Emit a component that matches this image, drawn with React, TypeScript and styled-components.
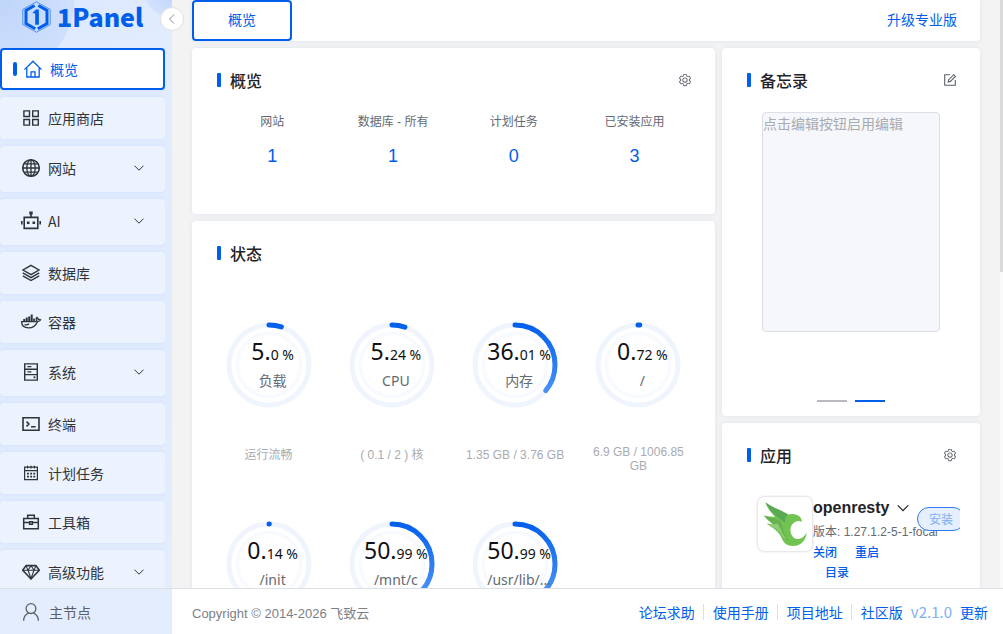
import React from "react";
import styled, { createGlobalStyle, css } from "styled-components";

const blue = "#005eeb";
const latin = `"Liberation Sans", "Noto Sans CJK SC", sans-serif`;
const cjk = `"Noto Sans CJK SC", sans-serif`;

const GlobalStyle = createGlobalStyle`
  *, *::before, *::after { box-sizing: border-box; }
  body { margin: 0; font-family: ${latin}; font-size: 14px; color: #1f2329; background: #f3f3f3; }
  button, textarea { font: inherit; margin: 0; }
  button { border: 0; background: none; padding: 0; cursor: pointer; color: inherit; }
  a { color: inherit; text-decoration: none; }
  h1, h2, h3, p, ul { margin: 0; padding: 0; font-weight: inherit; }
  ul { list-style: none; }
  svg { display: block; flex: none; }
`;

/* ---------- shell ---------- */

const Shell = styled.div`
  display: flex;
  height: 100vh;
  overflow: hidden;
`;

const Sidebar = styled.aside`
  position: relative;
  z-index: 2;
  flex: none;
  width: 172px;
  display: flex;
  flex-direction: column;
  background:
    radial-gradient(circle at 170px -10px, #bdd3fa 0, #d3e2fd 26px, transparent 27px),
    radial-gradient(circle at 0 0, #bfd5fa 0, #cfe0fc 74px, transparent 75px),
    linear-gradient(160deg, #dbe7fd 0, #e1ecfe 90px, #e0ecfe 420px, #e4edfd 100%);
`;

const Brand = styled.a`
  display: flex;
  align-items: center;
  gap: 5px;
  height: 34px;
  margin-bottom: 14px;
  padding-left: 21px;
  color: ${blue};
`;

const BrandName = styled.span`
  padding-bottom: 2px;
  font: 900 25px/32px "Noto Sans CJK SC", sans-serif;
`;

const CollapseButton = styled.button`
  position: absolute;
  top: 7px;
  right: -12px;
  width: 24px;
  height: 24px;
  display: grid;
  place-items: center;
  border: 1px solid #dfe0e3;
  border-radius: 50%;
  background: #fff;
  color: #8b8f96;
`;

const Menu = styled.ul`
  flex: 1;
  min-height: 0;
  overflow: hidden;
  display: flex;
  flex-direction: column;
  gap: 7px;
  margin-right: 7px;
`;

const MenuItem = styled.li`
  flex: none;
`;

const MenuLink = styled.a<{ $active?: boolean; $tall?: boolean }>`
  display: flex;
  align-items: center;
  height: ${(p) => (p.$tall ? 46 : 42)}px;
  padding: 0 20px ${(p) => (p.$tall ? 2 : 0)}px 11px;
  border-radius: 4px;
  background: #ecf3ff;
  box-shadow: 0 0 4px rgba(0, 94, 235, 0.08);
  color: #303338;
  font: 14px/20px ${cjk};
  ${(p) =>
    p.$active &&
    css`
      border: 2px solid ${blue};
      background: #fff;
      color: ${blue};
    `}
`;

const ActiveMark = styled.span<{ $on?: boolean }>`
  width: 4px;
  height: 14px;
  margin-right: 7px;
  border-radius: 2px;
  background: ${(p) => (p.$on ? blue : "transparent")};
`;

const MenuText = styled.span`
  flex: 1;
  margin-left: 8px;
`;

const NodeLink = styled.a`
  flex: none;
  display: flex;
  align-items: center;
  gap: 9px;
  height: 46px;
  padding: 0 0 0 22px;
  border-top: 1px solid #dcdfe6;
  background: #e4edfd;
  color: #5b6068;
  font: 14px/20px ${cjk};
`;

const Main = styled.div`
  flex: 1;
  min-width: 0;
  display: flex;
  flex-direction: column;
`;

const Viewport = styled.div`
  flex: 1;
  min-height: 0;
  display: flex;
`;

const Page = styled.main`
  flex: 1;
  min-width: 0;
  overflow: hidden;
  padding: 0 20px;
`;

const ScrollRail = styled.div`
  flex: none;
  width: 3px;
  background: #fafafa;
`;

const ScrollThumb = styled.div`
  height: 272px;
  background: #dadada;
`;

const TabBar = styled.nav`
  display: flex;
  align-items: center;
  justify-content: space-between;
  height: 41px;
  margin-bottom: 7px;
  padding-right: 23px;
  border-radius: 0 0 4px 4px;
  background: #fff;
  box-shadow: 0 0 4px rgba(0, 94, 235, 0.1);
  color: ${blue};
  font: 14px/20px ${cjk};
`;

const Tab = styled.button`
  width: 100px;
  height: 41px;
  padding-bottom: 4px;
  border: 2px solid ${blue};
  border-radius: 4px;
`;

const UpgradeLink = styled.a`
  padding-bottom: 4px;
`;

const Columns = styled.div`
  display: grid;
  grid-template-columns: 2fr 1fr;
  margin-right: -7px;
`;

const Column = styled.div`
  min-width: 0;
  display: flex;
  flex-direction: column;
  gap: 7px;
  padding-right: 7px;
`;

/* ---------- cards ---------- */

const Card = styled.section`
  padding: 19px 20px 14px;
  border-radius: 4px;
  background: #fff;
  box-shadow: 0 0 4px rgba(0, 94, 235, 0.1);
`;

const CardHeader = styled.header`
  display: flex;
  align-items: center;
  height: 26px;
  padding: 0 3px 0 5px;
`;

const CardMark = styled.span`
  width: 4px;
  height: 14px;
  margin-right: 9px;
  border-radius: 1px;
  background: ${blue};
`;

const CardTitle = styled.h2`
  flex: 1;
  font: 500 16px/24px ${cjk};
  color: #1f2329;
`;

const IconButton = styled.button`
  color: #5b6068;
`;

const Stats = styled.div`
  display: grid;
  grid-template-columns: repeat(4, 1fr);
  margin-top: 20px;
  padding-bottom: 32px;
  text-align: center;
`;

const StatLabel = styled.p`
  font-size: 12px;
  line-height: 18px;
  color: #646a73;
`;

const StatValue = styled.a`
  display: block;
  margin-top: 13px;
  font-size: 18px;
  line-height: 24px;
  color: ${blue};
`;

const Gauges = styled.div`
  display: grid;
  grid-template-columns: repeat(4, 1fr);
  grid-auto-rows: 199px;
  margin: 56px -5px 0;
`;

const Gauge = styled.div`
  display: flex;
  flex-direction: column;
  align-items: center;
`;

const Dial = styled.div`
  display: grid;
  width: 86px;
  height: 86px;
  > * {
    grid-area: 1 / 1;
  }
`;

const DialText = styled.div`
  display: flex;
  flex-direction: column;
  align-items: center;
  padding: 15px 0 0 8px;
  white-space: nowrap;
  font-family: "Noto Sans", ${cjk};
  z-index: 1;
`;

const DialValue = styled.p`
  display: flex;
  align-items: baseline;
  height: 28px;
  font-size: 14px;
  line-height: 28px;
  color: #0f1114;
`;

const DialWhole = styled.span`
  font-size: 23px;
`;

const DialName = styled.p`
  margin-top: 6px;
  font-size: 14px;
  line-height: 20px;
  color: #646a73;
`;

const GaugeNote = styled.p`
  display: flex;
  align-items: center;
  max-width: 102px;
  min-height: 20px;
  margin-top: 37px;
  font-size: 12px;
  line-height: 14px;
  text-align: center;
  color: #a8abb2;
`;

const Memo = styled.textarea`
  display: block;
  width: calc(100% - 40px);
  height: 220px;
  margin: 19px 20px 68px;
  padding: 0;
  resize: none;
  border: 1px solid #dcdfe6;
  border-radius: 4px;
  background: #f5f7fa;
  font: 14px/21px ${cjk};
  &::placeholder {
    color: #a8abb2;
  }
`;

const Pager = styled.div`
  display: flex;
  justify-content: center;
  gap: 8px;
`;

const PagerDash = styled.button<{ $on?: boolean }>`
  width: 30px;
  height: 2px;
  background: ${(p) => (p.$on ? blue : "#b8bac0")};
`;

const AppRow = styled.div`
  display: flex;
  align-items: flex-start;
  gap: 1px;
  margin-top: 27px;
  padding: 2px 0 60px 16px;
  overflow: hidden;
`;

const AppLogo = styled.div`
  flex: none;
  display: grid;
  place-items: center;
  width: 54px;
  height: 54px;
  border-radius: 6px;
  background: #fff;
  box-shadow: 0 0 3px rgba(0, 0, 0, 0.25);
`;

const AppInfo = styled.div`
  flex: none;
  width: 103px;
  white-space: nowrap;
`;

const AppName = styled.h3`
  display: flex;
  align-items: center;
  gap: 7px;
  height: 22px;
  font-size: 16px;
  font-weight: 700;
  color: #1f2329;
`;

const AppVersion = styled.p`
  margin-top: 3px;
  font-size: 12px;
  line-height: 20px;
  color: #646a73;
`;

const AppActions = styled.div`
  display: flex;
  flex-wrap: wrap;
  column-gap: 6px;
`;

const TextButton = styled.button`
  font: 500 12px/20px ${cjk};
  color: ${blue};
  & + & {
    margin-left: 12px;
  }
`;

const InstallButton = styled.button`
  z-index: 1;
  flex: none;
  width: 48px;
  height: 24px;
  margin-top: 10px;
  border: 1px solid #2f7af0;
  border-radius: 12px;
  background: #e5effd;
  color: #80aff5;
  font: 12px/20px ${cjk};
`;

/* ---------- footer ---------- */

const Footer = styled.footer`
  flex: none;
  display: flex;
  align-items: center;
  justify-content: space-between;
  height: 46px;
  padding: 1px 15px 0 20px;
  border-top: 1px solid #dcdfe6;
  background: #fff;
`;

const Copyright = styled.span`
  font-size: 13px;
  color: #7d8086;
`;

const FooterLinks = styled.div`
  display: flex;
  align-items: center;
  gap: 8px;
  font: 14px/20px ${cjk};
  color: ${blue};
`;

const Divider = styled.span`
  width: 1px;
  height: 16px;
  margin-right: 1px;
  background: #dcdfe6;
`;

const Version = styled.span`
  font-size: 15px;
  color: #80aff5;
`;

/* ---------- drawings ---------- */

const Svg = ({ size = 18, children, w = 1.4 }: { size?: number; w?: number; children: React.ReactNode }) => (
  <svg width={size} height={size} viewBox="0 0 18 18" fill="none" stroke="currentColor" strokeWidth={w} overflow="visible" aria-hidden>
    {children}
  </svg>
);

const icons: Record<string, React.ReactNode> = {
  home: (
    <Svg w={1.3}>
      <path d="M.5 9.6 9 1.2l8.5 8.4M2.8 8v9h12.4V8M7 17v-5.2h4V17" />
    </Svg>
  ),
  grid: (
    <Svg w={1.4}>
      <path d="M1.9 1.9h5.6v5.6H1.9zM10.7 1.9h5.6v5.6h-5.6zM1.9 10.5h5.6v5.6H1.9zM10.7 10.5h5.6v5.6h-5.6z" />
    </Svg>
  ),
  globe: (
    <Svg w={1.3}>
      <circle cx="9" cy="9" r="8.3" strokeWidth="1.6" />
      <ellipse cx="9" cy="9" rx="4.2" ry="8.2" />
      <path d="M9 .8v16.4M.8 9h16.4M2.2 4.8h13.6M2.2 13.2h13.6" />
    </Svg>
  ),
  robot: (
    <Svg w={1.6}>
      <path d="M2.2 5.4h13.6v11H2.2zM9 5V2" />
      <path d="M7.3-.4h3.400v3H7.300zM4.9 9.4h2.6V12H4.9zM10.5 9.4h2.6V12h-2.6zM-1 9h1.600v3.6H-1zM17.4 9H19v3.6h-1.600z" fill="currentColor" stroke="none" />
    </Svg>
  ),
  layers: (
    <Svg w={1.4}>
      <path d="M9 1.4 17 6 9 10.600 1 6zM.8 8.900 9 13.600l8.200-4.700M.8 11.800 9 16.500l8.200-4.700" />
    </Svg>
  ),
  docker: (
    <Svg w={1.3}>
      <path d="M-.4 8.600H12.800C14.200 8.600 14.600 8 14.500 7.200 14 6.200 14.200 5.200 14.800 4.400c.9.500 1.300 1.200 1.400 2 .9-.2 1.700-.1 2.400.3-.5 1.100-1.500 1.700-3 1.700C13.700 13 10.800 14.800 6.600 14.800c-4.800 0-7-2-7-6.200Z" />
      <path d="M2.500 11.600c1.800.5 3.300.2 4.500-.8" />
      <path d="M1.200 6h2v2h-2zM3.700 4.400h2V8h-2zM6.200 3.600h2V8h-2zM8.700 1.600h2V8h-2zM11.200 5.600h1.700V8h-1.700z" fill="currentColor" stroke="none" />
    </Svg>
  ),
  server: (
    <Svg w={1.4}>
      <path d="M2.700.9h12.600v16.200H2.700zM2.700 6.200h12.600M2.700 11.600h12.600M5.400 3.600h4M5.400 8.900h4" />
      <path d="M11.600 13.400h1.800v1.800h-1.800z" fill="currentColor" stroke="none" />
    </Svg>
  ),
  terminal: (
    <Svg w={1.6}>
      <path d="M1 2.800h16v12.400H1zM4.500 6.600l2.400 2.400-2.400 2.400M9 11.800h4.600" />
    </Svg>
  ),
  calendar: (
    <Svg w={1.2}>
      <path d="M2.600 3.200h12.800v12.400H2.600zM2.600 6.600h12.800M5.600 1.800v2.600M9 1.800v2.600M12.400 1.800v2.600" />
      <path d="M5 9.600h8.200M5 12.600h8.200" strokeWidth="1.600" strokeDasharray="1.900 1.250" />
    </Svg>
  ),
  toolbox: (
    <Svg w={1.500}>
      <path d="M1.700 5.400h14.600v10.400H1.700zM5.700 5.200V2.200h6.600v3M1.700 9.400h5.500M10.800 9.400h5.500M7.600 8.800h2.800v2.400H7.600z" />
    </Svg>
  ),
  gem: (
    <Svg w={1.600}>
      <path d="M4 2.600h10l3.300 4.600L9 16 .7 7.200z" strokeLinejoin="round" />
      <path d="M.7 7.200h16.600M4 2.600l2 4.600L9 2.800l3 4.400 2-4.600M6 7.200 9 15.500l3-8.300" strokeWidth="1.100" />
    </Svg>
  ),
  user: (
    <Svg w={1.300}>
      <circle cx="9" cy="5.600" r="4.900" />
      <path d="M1.600 17.800c.2-4.300 2.500-6.700 5-7.600M16.400 17.800c-.2-4.300-2.500-6.700-5-7.600" />
    </Svg>
  ),
};

const Chevron = ({ size = 12, d = "M1.500 3.700 6 8.200l4.500-4.500" }: { size?: number; d?: string }) => (
  <svg width={size} height={size} viewBox="0 0 12 12" fill="none" stroke="currentColor" strokeWidth="1" aria-hidden>
    <path d={d} />
  </svg>
);

const Gear = () => (
  <svg width="14" height="14" viewBox="0 0 1024 1024" fill="currentColor" aria-hidden>
    <path d="M600.704 64a32 32 0 0 1 30.464 22.208l35.2 109.376c14.784 7.232 28.928 15.36 42.432 24.512l112.384-24.192a32 32 0 0 1 34.432 15.36L944.32 364.8a32 32 0 0 1-4.032 37.504l-77.12 85.12a357.12 357.12 0 0 1 0 49.024l77.12 85.248a32 32 0 0 1 4.032 37.504l-88.704 153.6a32 32 0 0 1-34.432 15.296L708.8 803.904c-13.44 9.088-27.648 17.28-42.368 24.512l-35.264 109.376A32 32 0 0 1 600.704 960H423.296a32 32 0 0 1-30.464-22.208L357.696 828.48a351.616 351.616 0 0 1-42.56-24.64l-112.32 24.256a32 32 0 0 1-34.432-15.36L79.68 659.2a32 32 0 0 1 4.032-37.504l77.12-85.248a357.12 357.12 0 0 1 0-48.896l-77.12-85.248A32 32 0 0 1 79.68 364.8l88.704-153.6a32 32 0 0 1 34.432-15.296l112.32 24.256c13.568-9.152 27.776-17.408 42.56-24.64l35.2-109.312A32 32 0 0 1 423.232 64H600.64zm-23.424 64H446.72l-36.352 113.088-24.512 11.968a294.113 294.113 0 0 0-34.816 20.096l-22.656 15.36-116.224-25.088-65.28 113.152 79.68 88.192-1.92 27.136a293.12 293.12 0 0 0 0 40.192l1.92 27.136-79.808 88.192 65.344 113.152 116.224-25.024 22.656 15.296a294.113 294.113 0 0 0 34.816 20.096l24.512 11.968L446.72 896h130.688l36.48-113.152 24.448-11.904a288.282 288.282 0 0 0 34.752-20.096l22.592-15.296 116.288 25.024 65.28-113.152-79.744-88.192 1.92-27.136a293.12 293.12 0 0 0 0-40.256l-1.92-27.136 79.808-88.128-65.344-113.152-116.288 24.96-22.592-15.232a287.616 287.616 0 0 0-34.752-20.096l-24.448-11.904L577.344 128zM512 320a192 192 0 1 1 0 384 192 192 0 0 1 0-384zm0 64a128 128 0 1 0 0 256 128 128 0 0 0 0-256z" />
  </svg>
);

const EditIcon = () => (
  <svg width="14" height="14" viewBox="0 0 14 14" fill="none" stroke="currentColor" strokeWidth="1.100" aria-hidden>
    <path d="M7 1.700H1.700v10.600h10.600V7" />
    <path d="M5.200 8.900l.5-2.200 5-5 1.700 1.700-5 5z" />
  </svg>
);

const BrandMark = () => (
  <svg width="31" height="32" viewBox="0 0 31 32" fill="none" stroke={blue} aria-hidden>
    <path d="M15.500.800 29.200 8.400v15.200L15.500 31.200 1.800 23.600V8.400z" strokeWidth=".8" opacity=".75" />
    <path d="M13.600 4.500 5 9.400v13.200l9.200 5.100M17.400 4.500 26 9.400v13.200l-9.200 5.100" strokeWidth="3" />
    <path d="M11.400 12l3.600-3.600h2.900v15.400h-3.700V12.600z" fill={blue} stroke="none" />
  </svg>
);

const OpenRestyLogo = () => (
  <svg width="44" height="46" viewBox="0 0 44 46" aria-hidden>
    <path d="M2.500 1.500C10 7 18 9 25 13.500c3-.7 6-.7 8.500.3 3.500 1.200 5.300 3.600 5.500 7.200-2-1.200-4-1.300-6-.5-5 2-6.500 7.500-5 12 1.300 4 4 5.500 7 5.500 4 0 7-3 8.500-6.500C43.500 39 38 45 30 45c-6 0-9.500-3-11.500-8C16 30 9 27 4 22.500c4 1 8 1 10-.2C8 20.500 4 18 1 14.500c4 1 7.500 1.500 11 1C8 12 4.500 7 2.500 1.500z" fill="#72c452" />
    <path d="M2.500 1.500C10 7 18 9 25 13.500c-2.500 2-3.500 5-3 8.500C16 16.500 7 12 2.500 1.500z" fill="#5aa955" />
    <path d="M1 14.500c6 2.500 12 2 17 6 2 6 2.500 14 8 19.500-5-1-8.500-6-10-10.500C12.500 23.500 5 21 1 14.500z" fill="#67b24c" />
    <path d="M4 22.500c4 1 8 1 10.500 0l3.500 6c1.500 4 3 7 6 10-4-1-5.500-4-6.500-6.500C14 26.500 8 27 4 22.500z" fill="#8ccc74" />
  </svg>
);

/* The arc is rotated to start at the top, so its gradient runs along x. */
const Ring = ({ id, percent }: { id: string; percent: number }) => {
  const length = 2 * Math.PI * 40;
  return (
    <svg width="86" height="86" viewBox="0 0 86 86" fill="none" aria-hidden>
      <defs>
        <linearGradient id={`arc-${id}`} gradientUnits="userSpaceOnUse" x1="86" y1="0" x2="0" y2="0">
          <stop offset="0" stopColor="#005eeb" />
          <stop offset="1" stopColor="#5b9cfa" />
        </linearGradient>
        <radialGradient id={`glow-${id}`}>
          <stop offset=".86" stopColor="#fff" />
          <stop offset="1" stopColor="#f3f7fe" />
        </radialGradient>
      </defs>
      <circle cx="43" cy="43" r="40" stroke="#f0f5fd" strokeWidth="5" />
      <circle cx="43" cy="43" r="33" fill={`url(#glow-${id})`} />
      <circle
        cx="43"
        cy="43"
        r="40"
        stroke={`url(#arc-${id})`}
        strokeWidth="5"
        strokeLinecap="round"
        strokeDasharray={`${(length * percent) / 100} ${length}`}
        transform="rotate(-90 43 43)"
      />
    </svg>
  );
};

/* ---------- data ---------- */

const menu = [
  { icon: "home", text: "概览", active: true },
  { icon: "grid", text: "应用商店" },
  { icon: "globe", text: "网站", more: true },
  { icon: "robot", text: "AI", more: true },
  { icon: "layers", text: "数据库" },
  { icon: "docker", text: "容器" },
  { icon: "server", text: "系统", more: true },
  { icon: "terminal", text: "终端" },
  { icon: "calendar", text: "计划任务" },
  { icon: "toolbox", text: "工具箱" },
  { icon: "gem", text: "高级功能", more: true },
];

const stats = [
  ["网站", "1"],
  ["数据库 - 所有", "1"],
  ["计划任务", "0"],
  ["已安装应用", "3"],
];

const gauges = [
  { whole: "5.", rest: "0 %", percent: 5, name: "负载", note: "运行流畅" },
  { whole: "5.", rest: "24 %", percent: 5.24, name: "CPU", note: "( 0.1 / 2 ) 核" },
  { whole: "36.", rest: "01 %", percent: 36.01, name: "内存", note: "1.35 GB / 3.76 GB" },
  { whole: "0.", rest: "72 %", percent: 0.72, name: "/", note: "6.9 GB / 1006.85 GB" },
  { whole: "0.", rest: "14 %", percent: 0.14, name: "/init", note: "" },
  { whole: "50.", rest: "99 %", percent: 50.99, name: "/mnt/c", note: "" },
  { whole: "50.", rest: "99 %", percent: 50.99, name: "/usr/lib/...", note: "" },
];

const Header = ({ title, action }: { title: string; action?: React.ReactNode }) => (
  <CardHeader>
    <CardMark />
    <CardTitle>{title}</CardTitle>
    {action}
  </CardHeader>
);

export default function App() {
  return (
    <>
      <GlobalStyle />
      <Shell>
        <Sidebar>
          <Brand href="#">
            <BrandMark />
            <BrandName>1Panel</BrandName>
          </Brand>
          <CollapseButton aria-label="收起菜单">
            <Chevron d="M8 1.500 3.500 6 8 10.500" />
          </CollapseButton>
          <Menu>
            {menu.map((m) => (
              <MenuItem key={m.text}>
                <MenuLink href="#" $active={m.active} $tall={m.more}>
                  <ActiveMark $on={m.active} />
                  {icons[m.icon]}
                  <MenuText>{m.text}</MenuText>
                  {m.more && <Chevron />}
                </MenuLink>
              </MenuItem>
            ))}
          </Menu>
          <NodeLink href="#">
            {icons.user}
            主节点
          </NodeLink>
        </Sidebar>

        <Main>
          <Viewport>
            <Page>
              <TabBar>
                <Tab>概览</Tab>
                <UpgradeLink href="#">升级专业版</UpgradeLink>
              </TabBar>
              <Columns>
                <Column>
                  <Card>
                    <Header title="概览" action={<IconButton aria-label="概览设置"><Gear /></IconButton>} />
                    <Stats>
                      {stats.map(([label, value]) => (
                        <div key={label}>
                          <StatLabel>{label}</StatLabel>
                          <StatValue href="#">{value}</StatValue>
                        </div>
                      ))}
                    </Stats>
                  </Card>
                  <Card>
                    <Header title="状态" />
                    <Gauges>
                      {gauges.map((g, i) => (
                        <Gauge key={g.name}>
                          <Dial>
                            <Ring id={String(i)} percent={g.percent} />
                            <DialText>
                              <DialValue>
                                <DialWhole>{g.whole}</DialWhole>
                                <span>{g.rest}</span>
                              </DialValue>
                              <DialName>{g.name}</DialName>
                            </DialText>
                          </Dial>
                          <GaugeNote>{g.note}</GaugeNote>
                        </Gauge>
                      ))}
                    </Gauges>
                  </Card>
                </Column>
                <Column>
                  <Card>
                    <Header title="备忘录" action={<IconButton aria-label="编辑备忘录"><EditIcon /></IconButton>} />
                    <Memo aria-label="备忘录" placeholder="点击编辑按钮启用编辑" readOnly />
                    <Pager>
                      <PagerDash aria-label="第一页" />
                      <PagerDash aria-label="第二页" $on />
                    </Pager>
                  </Card>
                  <Card>
                    <Header title="应用" action={<IconButton aria-label="应用设置"><Gear /></IconButton>} />
                    <AppRow>
                      <AppLogo>
                        <OpenRestyLogo />
                      </AppLogo>
                      <AppInfo>
                        <AppName>
                          openresty
                          <Chevron size={14} />
                        </AppName>
                        <AppVersion>版本: 1.27.1.2-5-1-focal</AppVersion>
                        <AppActions>
                          <TextButton>关闭</TextButton>
                          <TextButton>重启</TextButton>
                          <TextButton>目录</TextButton>
                        </AppActions>
                      </AppInfo>
                      <InstallButton>安装</InstallButton>
                    </AppRow>
                  </Card>
                </Column>
              </Columns>
            </Page>
            <ScrollRail>
              <ScrollThumb />
            </ScrollRail>
          </Viewport>
          <Footer>
            <Copyright>Copyright © 2014-2026 飞致云</Copyright>
            <FooterLinks>
              <a href="#">论坛求助</a>
              <Divider />
              <a href="#">使用手册</a>
              <Divider />
              <a href="#">项目地址</a>
              <Divider />
              <a href="#">社区版</a>
              <Version>v2.1.0</Version>
              <a href="#">更新</a>
            </FooterLinks>
          </Footer>
        </Main>
      </Shell>
    </>
  );
}
